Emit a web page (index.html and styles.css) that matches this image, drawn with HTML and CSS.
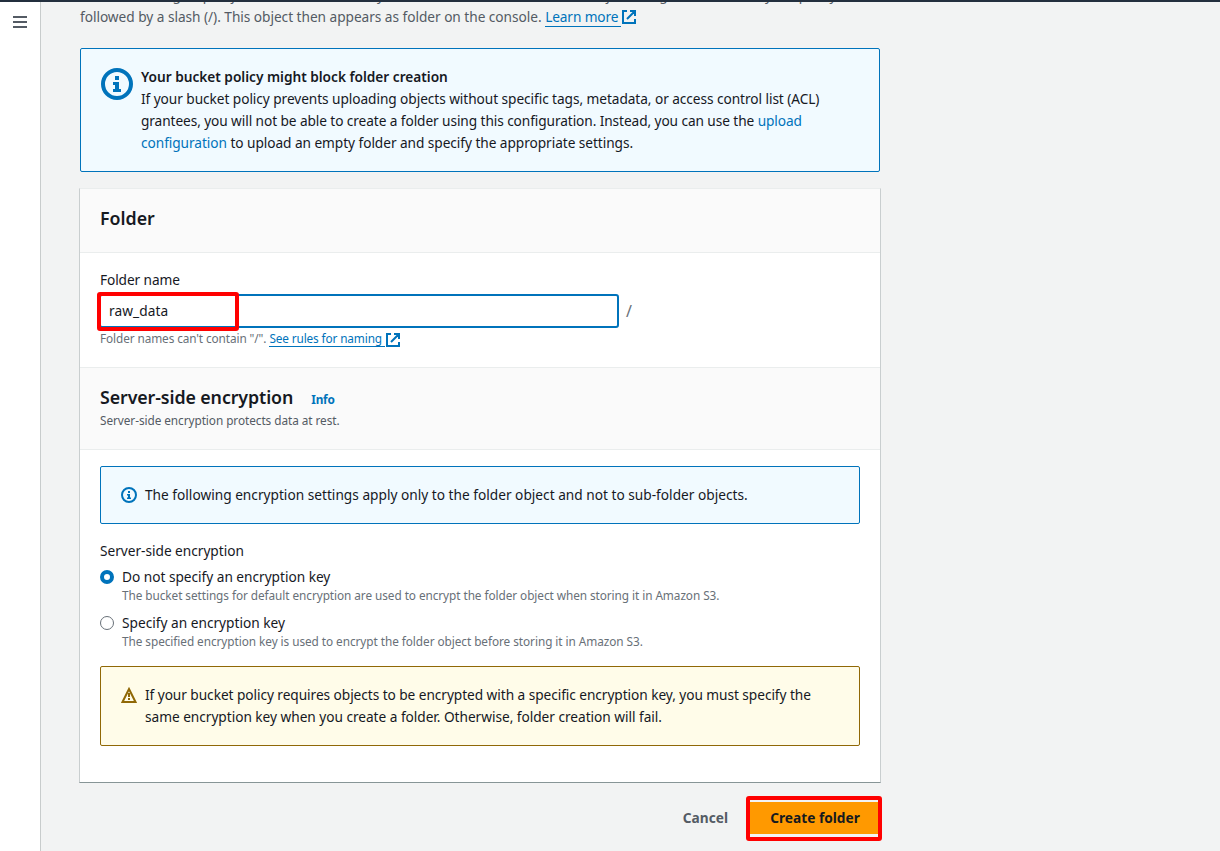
FILE: index.html
```html
<!DOCTYPE html>
<html lang="en">
<head>
<meta charset="utf-8">
<title>Create folder</title>
<link rel="stylesheet" href="styles.css">
</head>
<body>
<div class="topbar"></div>
<div class="shell">
  <nav class="rail">
    <svg class="menu" width="14" height="12" viewBox="0 0 14 12" fill="#545b64"><path d="M0 0h14v2H0zM0 5h14v2H0zM0 10h14v2H0z"/></svg>
  </nav>
  <main class="main">
    <p class="intro"><span class="t t-top">Use folders to group objects in buckets. When you create a folder, S3 creates an object using the name that you specify</span><br><span class="t t-intro">followed by a slash (/). This object then appears as folder on the console.</span> <a class="link"><span class="t t-learn">Learn more</span></a><svg class="ext" width="14" height="14" viewBox="0 0 14 14" fill="none" stroke="#0073bb" stroke-width="2"><path d="M5 1H1v12h12V9M8 1h5v5M13 1 5 9"/></svg></p>

    <section class="alert alert-info alert-main">
      <svg class="icon-lg" width="32" height="32" viewBox="0 0 32 32"><circle cx="16" cy="16" r="14" fill="none" stroke="#0073bb" stroke-width="4"/><path d="M14 8h4v4h-4zM12 14h6v7h2v3h-8v-3h2v-4h-2z" fill="#0073bb"/></svg>
      <div>
        <strong class="t t-title">Your bucket policy might block folder creation</strong><br>
        <span class="t t-a1">If your bucket policy prevents uploading objects without specific tags, metadata, or access control list (ACL)</span><br>
        <span class="t t-a2">grantees, you will not be able to create a folder using this configuration. Instead, you can use the <a>upload</a></span><br>
        <span class="t t-a3"><a>configuration</a> to upload an empty folder and specify the appropriate settings.</span>
      </div>
    </section>

    <section class="card">
      <header class="card-head head-folder"><h2 class="t">Folder</h2></header>
      <div class="card-body body-folder">
        <label class="label"><span class="t t-fname">Folder name</span></label>
        <div class="field"><div class="input"><span class="t t-raw">raw_data</span><i class="mark mark-input"></i></div><span class="slash">/</span></div>
        <div class="hint"><span class="t t-hint">Folder names can't contain "/".</span> <a class="link"><span class="t t-rules">See rules for naming</span></a><svg class="ext" width="14" height="14" viewBox="0 0 14 14" fill="none" stroke="#0073bb" stroke-width="2"><path d="M5 1H1v12h12V9M8 1h5v5M13 1 5 9"/></svg></div>
      </div>
      <header class="card-head head-sse">
        <div class="head-row"><h2 class="t t-sse">Server-side encryption</h2><a class="info t">Info</a></div>
        <div class="desc"><span class="t t-desc">Server-side encryption protects data at rest.</span></div>
      </header>
      <div class="card-body body-sse">
        <div class="alert alert-info alert-sub">
          <svg class="icon-sm" width="16" height="16" viewBox="0 0 16 16"><circle cx="8" cy="8" r="7" fill="none" stroke="#0073bb" stroke-width="2"/><path d="M7 4h2v2H7zM6 7h3v3.500h1V12H6v-1.500h1V8.500H6z" fill="#0073bb"/></svg>
          <span class="t">The following encryption settings apply only to the folder object and not to sub-folder objects.</span>
        </div>
        <div class="label group"><span class="t t-group">Server-side encryption</span></div>
        <div class="option"><i class="radio on"></i><div><div class="opt-name"><span class="t t-group">Do not specify an encryption key</span></div><div class="opt-desc"><span class="t t-d1">The bucket settings for default encryption are used to encrypt the folder object when storing it in Amazon S3.</span></div></div></div>
        <div class="option"><i class="radio"></i><div><div class="opt-name"><span class="t">Specify an encryption key</span></div><div class="opt-desc"><span class="t t-d2">The specified encryption key is used to encrypt the folder object before storing it in Amazon S3.</span></div></div></div>
        <div class="alert alert-warn">
          <svg class="icon-sm" width="16" height="16" viewBox="0 0 16 16"><path d="M8 2 14.500 15H1.500z" fill="none" stroke="#906806" stroke-width="2"/><path d="M7 6h2v4H7zM7 11h2v2H7z" fill="#906806"/></svg>
          <div><span class="t t-w1">If your bucket policy requires objects to be encrypted with a specific encryption key, you must specify the</span><br><span class="t t-w2">same encryption key when you create a folder. Otherwise, folder creation will fail.</span></div>
        </div>
      </div>
    </section>

    <div class="actions">
      <a class="cancel t">Cancel</a>
      <div class="create"><span class="t">Create folder</span><i class="mark mark-create"></i></div>
    </div>
  </main>
</div>
</body>
</html>
```
FILE: styles.css
```css
* { box-sizing: border-box; }
body { margin: 0; height: 851px; overflow: hidden; background: #f2f3f3; color: #16191f; font: 13.7px/22px "Noto Sans", sans-serif; }
.t { white-space: nowrap; }
.t-top, .t-intro { letter-spacing: -0.04px; }
.t-learn { letter-spacing: -0.12px; }
.t-title { font-weight: 600; letter-spacing: -0.02px; }
.t-a1 { letter-spacing: -0.067px; }
.t-a2 { letter-spacing: -0.09px; }
.t-a3 { letter-spacing: -0.06px; }
.t-fname { letter-spacing: -0.1px; }
.t-raw { letter-spacing: 0.07px; }
.t-hint { letter-spacing: -0.1px; }
.t-rules { letter-spacing: -0.13px; }
.t-sse { letter-spacing: -0.09px; }
.t-desc { letter-spacing: -0.06px; }
.t-group { letter-spacing: -0.025px; }
.t-d1 { letter-spacing: -0.065px; }
.t-d2 { letter-spacing: -0.057px; }
.t-w1 { letter-spacing: -0.06px; }
.t-w2 { letter-spacing: -0.035px; }
a { color: #0073bb; }
h2 { margin: 0; font-size: 17.8px; line-height: 22px; font-weight: 600; }
.topbar { position: relative; z-index: 2; height: 2px; background: #232f3e; }
.shell { display: flex; height: 849px; }
.rail { width: 41px; padding: 14px 0 0 13px; background: #fff; border-right: 1px solid #c8cccc; }
.menu { display: block; }
.main { width: 840px; padding-left: 39px; }
.intro { height: 44px; margin: -18px 0 20px; color: #545b64; white-space: nowrap; }
.link { display: inline-block; height: 21px; line-height: 22px; padding-right: 3px; border-bottom: 1px solid #0073bb; vertical-align: top; }
.ext { margin-left: 1px; vertical-align: -2px; }
.alert { display: flex; border: 1px solid; border-radius: 2px; }
.alert-info { background: #f1faff; border-color: #0073bb; }
.alert-warn { background: #fffce9; border-color: #906806; }
.alert-main { width: 800px; height: 124px; padding: 17px 20px; gap: 8px; }
.icon-lg { flex: none; margin-top: 2px; }
.card { width: 802px; height: 595px; margin: 16px 0 0 -1px; background: #fff; border: 1px solid #c9cecf; border-top-color: #eaeded; border-bottom-color: #879596; }
.card-head { background: #fafafa; border-bottom: 1px solid #eaeded; padding-left: 20px; }
.head-folder { height: 64px; padding-top: 18px; }
.body-folder { height: 114px; padding: 16px 20px 0; }
.label { display: block; }
.field { display: flex; align-items: center; gap: 7px; margin-top: 3px; color: #687078; }
.input { position: relative; width: 520px; height: 34px; margin-left: -1px; padding: 4px 8px; border: 2px solid #0073bb; border-radius: 3px; color: #16191f; }
.slash { font-size: 16px; }
.mark { position: absolute; border: 4px solid #f00; border-radius: 3px; }
.mark-input { left: -4px; top: -4px; width: 142px; height: 39px; }
.mark-create { left: -4px; top: -6px; width: 136px; height: 45px; }
.hint, .opt-desc { font-size: 11.8px; color: #687078; }
.hint { height: 22px; margin-top: -1px; white-space: nowrap; }
.hint .link { height: 20px; }
.head-sse { height: 83px; border-top: 1px solid #eaeded; padding-top: 18px; }
.head-row { display: flex; gap: 18px; align-items: baseline; height: 22px; }
.info { font-size: 11.8px; font-weight: 700; letter-spacing: -0.2px; }
.desc { font-size: 11.8px; line-height: 24px; color: #545b64; }
.hint .ext { vertical-align: -4px; }
.body-sse { padding: 16px 20px 0; }
.alert-sub { height: 58px; padding: 17px 20px; gap: 8px; }
.icon-sm { flex: none; margin-top: 3px; }
.group { margin-top: 16px; }
.option { display: flex; gap: 8px; height: 46px; padding-top: 4px; }
.radio { flex: none; width: 14px; height: 14px; margin-top: 4px; border: 1px solid #687078; border-radius: 50%; }
.radio.on { border: 4px solid #0073bb; }
.opt-desc { line-height: 14px; }
.alert-warn { height: 80px; margin-top: 12px; padding: 17px 20px; gap: 8px; }
.actions { display: flex; width: 802px; align-items: center; justify-content: flex-end; gap: 22px; margin-top: 19px; font-weight: 700; }
.cancel { color: #545b64; }
.create { position: relative; width: 132px; height: 32px; padding-right: 2px; background: #ff9900; text-align: center; line-height: 32px; }
```
